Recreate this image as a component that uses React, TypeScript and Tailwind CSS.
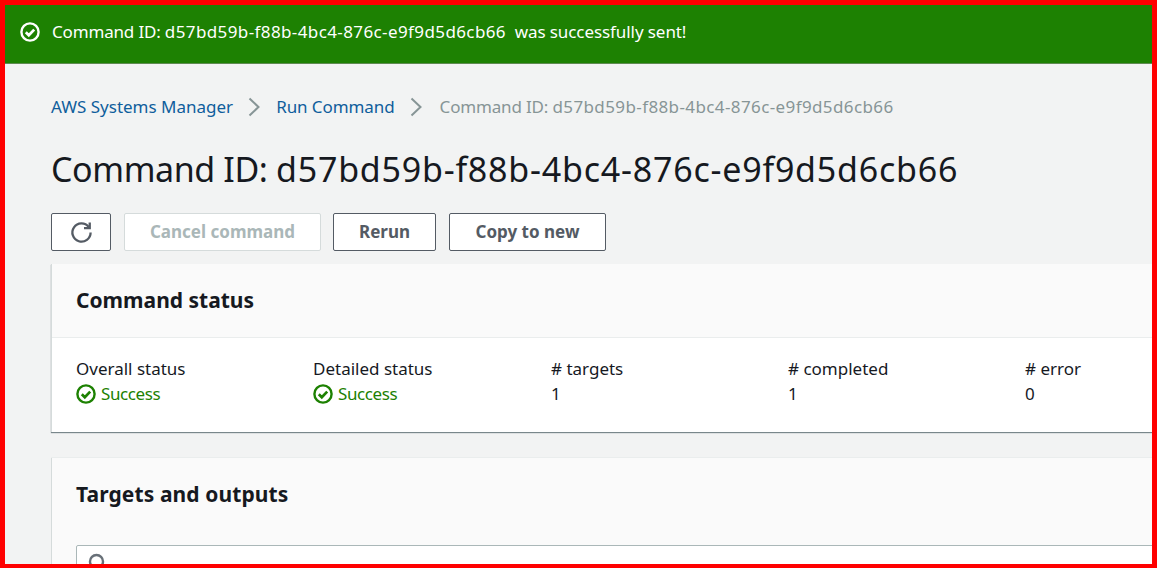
import React from 'react';

const commandId = 'd57bd59b-f88b-4bc4-876c-e9f9d5d6cb66';

function CheckCircle({ className, weight }: { className: string; weight: number }) {
  return (
    <svg viewBox="0 0 20 20" fill="none" stroke="currentColor" className={className}>
      <circle cx="10" cy="10" r="8.6" strokeWidth={weight} />
      <path d="M5.8 10.2l3 3 5.4-5.6" strokeWidth={weight + 0.3} />
    </svg>
  );
}

function Chevron() {
  return (
    <svg viewBox="0 0 12 20" fill="none" stroke="#879596" strokeWidth="2" className="h-5 w-3">
      <path d="M1.5 1.5l9 8.5-9 8.5" />
    </svg>
  );
}

function Refresh() {
  return (
    <svg viewBox="0 0 24 24" fill="none" stroke="#545b64" strokeWidth="2.4" className="h-[23px] w-[23px]">
      <path d="M19.5 6.2A9.5 9.5 0 1 0 21.5 12" />
      <path d="M20.6 1.5v6h-6" />
    </svg>
  );
}

function Stat({ label, value, ok }: { label: string; value: string; ok?: boolean }) {
  return (
    <div className="w-[237px] shrink-0">
      {ok ? (
        <>
          <p className="text-[#16191f]">{label}</p>
          <p className="mt-[3px] flex items-center gap-[5px] tracking-[-0.4px] text-[#1d8102]">
            <CheckCircle className="h-5 w-5" weight={2.4} />
            {value}
          </p>
        </>
      ) : (
        <div className="pl-px text-[#16191f]">
          <p>{label}</p>
          <p className="mt-[3px]">{value}</p>
        </div>
      )}
    </div>
  );
}

export default function App() {
  return (
    <div
      className="h-[568px] w-[1157px] overflow-hidden border-t-[5px] border-r-[5px] border-b-[4px] border-l-[5px] border-[#ff0000] bg-[#f2f3f3] font-['Noto_Sans',sans-serif] text-[17px] leading-[22px]"
    >
      <div className="flex h-[59px] items-center gap-3 border-b border-[#5f8a52] bg-[#1d8102] pb-[5px] pl-[15px] text-white">
        <CheckCircle className="h-5 w-5" weight={2.4} />
        <span className="whitespace-pre">
          <span className="tracking-[-0.17px]">Command ID: </span>
          <span className="tracking-[0.39px]">{commandId}</span>
          <span className="tracking-[-0.08px]">  was successfully sent!</span>
        </span>
      </div>

      <div className="pl-[46px]">
        <nav className="mt-8 flex h-[22px] items-center">
          <a className="text-[#0f5e9c]">AWS Systems Manager</a>
          <span className="mr-4 ml-[15px] flex"><Chevron /></span>
          <a className="tracking-[-0.08px] text-[#0f5e9c]">Run Command</a>
          <span className="mr-[18px] ml-[15px] flex"><Chevron /></span>
          <span className="whitespace-pre text-[#879596]">
            <span className="tracking-[-0.17px]">Command ID: </span>
            <span className="tracking-[0.39px]">{commandId}</span>
          </span>
        </nav>

        <h1 className="mt-[29px] whitespace-pre text-[34px] leading-[44px] text-[#16191f]">
          <span className="tracking-[-0.4px]">Command ID: </span>
          <span className="tracking-[0.78px]">{commandId}</span>
        </h1>

        <div className="mt-[22px] flex gap-3 font-bold">
          <button className="mr-px flex h-[38px] w-[60px] items-center justify-center rounded-[2px] border border-[#545b64] bg-white">
            <Refresh />
          </button>
          <button className="h-[38px] w-[197px] rounded-[2px] border border-[#d5dbdb] bg-white text-[#aab7b8]">Cancel command</button>
          <button className="h-[38px] w-[103px] rounded-[2px] border border-[#545b64] bg-white text-[#545b64]">Rerun</button>
          <button className="ml-px h-[38px] w-[157px] rounded-[2px] border border-[#545b64] bg-white text-[#545b64]">Copy to new</button>
        </div>

        <section className="mt-[13px] w-[1300px] border-l border-[#d5dbdb] bg-white shadow-[0_1px_1px_0_rgba(0,28,36,0.5)]">
          <div className="flex h-[74px] items-center border-b border-[#eaeded] bg-[#fafafa] pb-[2px] pl-6">
            <h2 className="text-[21px] font-bold text-[#16191f]">Command status</h2>
          </div>
          <div className="flex h-[94px] pl-6 pt-5">
            <Stat label="Overall status" value="Success" ok />
            <Stat label="Detailed status" value="Success" ok />
            <Stat label="# targets" value="1" />
            <Stat label="# completed" value="1" />
            <Stat label="# error" value="0" />
          </div>
        </section>

        <section className="mt-[26px] h-[200px] w-[1300px] border-l border-[#d5dbdb] bg-[#fafafa] pl-6 shadow-[0_-1px_0_0_#eaeded]">
          <h2 className="pt-[25px] text-[21px] font-bold leading-[22px] tracking-[0.1px] text-[#16191f]">Targets and outputs</h2>
          <div className="mt-[40px] h-[40px] rounded-tl-[2px] border border-[#aab7b8] bg-white pl-[11px] pt-[7px]">
            <svg viewBox="0 0 20 20" fill="none" stroke="#687078" strokeWidth="2.4" className="h-5 w-5">
              <circle cx="8.5" cy="8.5" r="6.5" />
              <path d="M13.5 13.5L19 19" />
            </svg>
          </div>
        </section>
      </div>
    </div>
  );
}
